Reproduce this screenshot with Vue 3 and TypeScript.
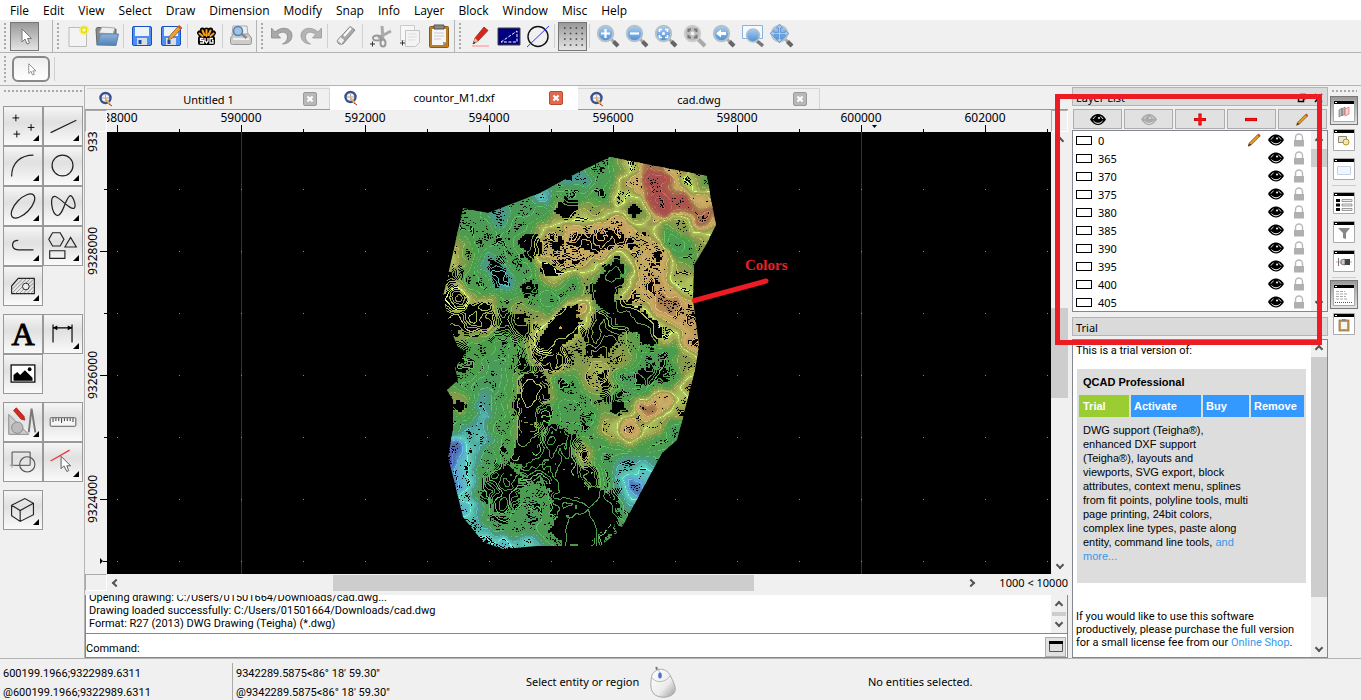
<script setup lang="ts">
type Pt = [number, number]
type Sample = [number, number, number]

const menus = ['File', 'Edit', 'View', 'Select', 'Draw', 'Dimension', 'Modify', 'Snap', 'Info', 'Layer', 'Block', 'Window', 'Misc', 'Help']

const toolbars = [
  { id: 'g-pick', tools: ['arrow*'] },
  { id: 'g-file', tools: ['new', 'open', '|', 'save', 'saveas', '|', 'svg', '|', 'preview'] },
  { id: 'g-edit', tools: ['undo', 'redo', '|', 'erase', '|', 'cut', 'copy', 'paste'] },
  { id: 'g-view', tools: ['pencil', 'draft', 'ortho', '|', 'grid*', '|', 'zin', 'zout', 'zauto', 'zsel', 'zprev', 'zwin', 'pan'] },
]

const palette = [
  ['points+', 'line+', 'arc+', 'circle+', 'ellipse+', 'spline+', 'poly+', 'shape+', 'hatch+'],
  ['text', 'dim+', 'image'],
  ['draft2+', 'ruler', 'info', 'snap+'],
  ['cube+'],
]

const tabs = [
  { name: 'Untitled 1', active: false },
  { name: 'countor_M1.dxf', active: true },
  { name: 'cad.dwg', active: false },
]

const layers = ['0', '365', '370', '375', '380', '385', '390', '395', '400', '405']
const layerTools = [
  { icon: 'eye', label: 'Show all layers' },
  { icon: 'eyeoff', label: 'Hide all layers' },
  { icon: 'plus', label: 'Add layer' },
  { icon: 'minus', label: 'Remove layer' },
  { icon: 'pen', label: 'Edit layer' },
]
const docks = ['wlayers*', 'wblocks', 'wview', '|', 'wprops', 'wfilter', 'wlib', '|', 'wcmd*', 'wclip']

const xTicks = Array.from({ length: 16 }, (_, i) => ({ x: 117 + i * 62, major: i % 2 === 0, label: String(588000 + i * 1000) }))
const yTicks = Array.from({ length: 7 }, (_, i) => ({ y: 189 + i * 62, major: i % 2 === 1 }))
const yLabels = [{ y: 251, t: '9328000' }, { y: 375, t: '9326000' }, { y: 499, t: '9324000' }]
const dots = yTicks.map(t => xTicks.map(x => `M${x.x} ${t.y}h1v1h-1z`).join('')).join('')

/* Terrain outline and elevation samples (x, y, height 0..1) */
const outline: Pt[] = [
  [610, 157], [707, 176], [711, 200], [716, 225], [706, 245], [694, 265], [693, 300], [699, 345], [695, 370],
  [683, 417], [677, 440], [662, 453], [622, 527], [614, 524], [617, 533], [600, 546], [575, 546], [537, 546], [503, 549],
  [483, 542], [463, 517], [454, 480], [448, 457], [453, 430], [453, 400], [447, 390], [458, 380], [455, 368], [466, 352],
  [458, 347], [452, 333], [443, 297], [453, 253], [463, 208], [488, 213], [540, 193], [573, 175],
]
const outlinePath = 'M' + outline.map(p => p.join(' ')).join('L') + 'Z'

const samples: Sample[] = [
  [610, 160, .4], [600, 175, .38], [585, 182, .24], [572, 180, .24], [540, 198, .2], [500, 217, .26], [600, 195, .42],
  [620, 165, .56], [628, 165, .68], [632, 180, .78], [622, 200, .7], [650, 160, .84], [655, 180, .97], [662, 205, 1], [685, 205, .93],
  [705, 218, .9], [690, 182, .68], [703, 182, .48], [712, 230, .7], [700, 198, .75], [676, 170, .75], [470, 215, .38],
  [480, 235, .42], [490, 265, .26], [498, 275, .22], [504, 285, .24], [480, 285, .44], [465, 255, .52], [454, 255, .66],
  [520, 225, .4], [520, 265, .4], [530, 245, .5], [560, 210, .58], [540, 212, .42], [575, 192, .38], [580, 218, .68], [590, 210, .6],
  [550, 235, .76], [545, 250, .78], [560, 262, .78], [575, 235, .8], [600, 232, .8], [620, 230, .8], [600, 250, .78], [530, 205, .32],
  [575, 262, .78], [553, 273, .66], [640, 242, .76], [634, 212, .52], [660, 255, .8], [650, 265, .78], [675, 237, .4],
  [681, 247, .36], [690, 253, .48], [700, 250, .6], [682, 270, .6], [688, 290, .68], [678, 227, .6], [655, 285, .8], [670, 305, .84],
  [690, 320, .8], [697, 345, .8], [528, 288, .45], [550, 298, .36], [570, 285, .44], [500, 302, .5], [520, 312, .6],
  [485, 305, .68], [460, 300, .72], [450, 325, .6], [480, 322, .66], [615, 272, .44], [605, 300, .46], [625, 318, .5], [645, 335, .48],
  [560, 325, .76], [580, 310, .76], [600, 330, .56], [632, 300, .76], [662, 330, .7], [500, 355, .38], [480, 350, .48], [470, 365, .5],
  [495, 368, .32], [520, 362, .5], [545, 345, .72], [555, 362, .65], [575, 350, .58], [590, 358, .6], [615, 340, .58], [620, 358, .62],
  [650, 365, .36], [640, 383, .36], [628, 375, .32], [670, 360, .42], [670, 380, .42], [685, 362, .6], [620, 395, .42], [606, 385, .62],
  [600, 372, .68], [619, 406, .5], [690, 385, .72], [668, 398, .8], [648, 410, .88], [628, 428, .8], [610, 430, .66], [655, 428, .66],
  [678, 410, .62], [660, 442, .42], [675, 432, .3], [460, 405, .62], [455, 422, .4], [465, 433, .22], [457, 450, .08],
  [448, 460, .02], [482, 435, .2], [485, 415, .2], [486, 398, .24], [487, 385, .3], [500, 400, .42], [513, 400, .56], [530, 395, .7],
  [530, 425, .6], [545, 395, .58], [565, 385, .42], [570, 410, .4], [585, 420, .42], [600, 445, .44], [525, 440, .55],
  [515, 460, .5], [510, 480, .46], [495, 480, .46], [500, 505, .46], [458, 485, .1], [463, 510, .14], [475, 450, .2],
  [470, 465, .18], [466, 480, .18], [468, 498, .2], [474, 515, .21], [482, 528, .22], [483, 475, .36], [482, 495, .38],
  [485, 540, .18], [505, 547, .16], [528, 544, .2], [492, 520, .38], [515, 528, .38], [545, 530, .4], [555, 460, .46],
  [570, 465, .48], [586, 455, .66], [592, 475, .56], [605, 455, .34], [620, 470, .22], [636, 487, .08], [645, 472, .16],
  [658, 460, .28], [618, 500, .34], [626, 495, .22], [608, 510, .44], [575, 530, .5], [590, 500, .48], [540, 490, .4], [527, 515, .32],
  [560, 500, .46], [505, 450, .44], [485, 455, .34], [500, 425, .46], [545, 415, .48], [555, 440, .44], [530, 505, .4],
]

/* Flat ground, where only every few contours are shown: cx, cy, rx, ry, rotation */
const flats: number[][] = [
  [613, 274, 12, 16, .2], [604, 292, 13, 14, 0], [628, 316, 22, 13, .5], [650, 333, 10, 15, .1], [560, 328, 14, 26, .6], [530, 398, 11, 26, 0],
  [530, 245, 10, 13, 0], [527, 288, 9, 7, 0], [565, 207, 10, 9, 0], [574, 528, 24, 18, 0], [598, 508, 16, 22, -.4],
  [526, 443, 12, 14, .4], [619, 405, 6, 6, 0], [568, 485, 20, 12, .3], [556, 243, 7, 8, 0],
  [507, 470, 5, 14, .3], [657, 257, 6, 6, 0], [545, 268, 7, 5, 0], [458, 406, 6, 7, 0], [633, 210, 5, 8, 0],
]
/* Gentle slopes: separate contour lines instead of dense ones */
const slopes: number[][] = [
  [490, 322, 48, 18, .25], [455, 300, 14, 34, 0], [545, 355, 26, 16, 0], [600, 330, 18, 26, .3], [600, 240, 34, 9, 0],
  [500, 490, 18, 30, 0], [550, 455, 36, 28, .2], [530, 400, 18, 38, 0], [585, 505, 34, 44, 0], [610, 385, 12, 20, 0],
  [460, 352, 8, 12, 0], [498, 272, 10, 14, 0], [560, 268, 20, 8, 0], [650, 375, 18, 9, 0],
]

const LEVELS = 130
const STEP = 2
const X0 = 440, Y0 = 154, NX = 140, NY = 200

function hash(x: number, y: number): number {
  const s = Math.sin(x * 127.1 + y * 311.7) * 43758.5453
  return s - Math.floor(s)
}
function noise(x: number, y: number): number {
  const ix = Math.floor(x), iy = Math.floor(y)
  const fx = x - ix, fy = y - iy
  const u = fx * fx * (3 - 2 * fx), v = fy * fy * (3 - 2 * fy)
  const a = hash(ix, iy), b = hash(ix + 1, iy), c = hash(ix, iy + 1), d = hash(ix + 1, iy + 1)
  return a + (b - a) * u + (c - a) * v + (a - b - c + d) * u * v - 0.5
}
function height(px: number, py: number): number {
  const x = px + noise(px / 9, py / 9) * 7
  const y = py + noise(px / 9 + 40, py / 9) * 7
  let sum = 0, weight = 0
  for (const [sx, sy, h] of samples) {
    const d = (x - sx) ** 2 + (y - sy) ** 2 + 60
    const w = 1 / (d * d)
    sum += w * h
    weight += w
  }
  return sum / weight + noise(px / 11, py / 11) * 0.035 + noise(px / 4, py / 4) * 0.018
}
function inside(areas: number[][], px: number, py: number): boolean {
  const x = px + noise(px / 5, py / 5) * 10, y = py + noise(px / 5 + 9, py / 5) * 10
  return areas.some(([cx, cy, rx, ry, r]) => {
    const dx = x - cx, dy = y - cy
    const u = dx * Math.cos(r) + dy * Math.sin(r), v = dy * Math.cos(r) - dx * Math.sin(r)
    return (u / rx) ** 2 + (v / ry) ** 2 < 1
  })
}

const ramp: [number, number[]][] = [
  [0, [98, 82, 196]], [.08, [76, 108, 176]], [.14, [92, 172, 206]], [.2, [92, 204, 180]], [.25, [74, 152, 152]], [.32, [74, 155, 90]],
  [.48, [76, 156, 74]], [.56, [116, 155, 74]], [.62, [152, 155, 76]], [.68, [176, 204, 98]], [.72, [155, 150, 76]], [.77, [204, 174, 100]],
  [.84, [160, 116, 76]], [.9, [172, 84, 76]], [1, [160, 74, 76]],
]
function colorAt(level: number): string {
  const t = Math.min(1, Math.max(0, level / LEVELS))
  let i = 1
  while (i < ramp.length - 1 && ramp[i][0] < t) i++
  const [t0, a] = ramp[i - 1], [t1, b] = ramp[i]
  const k = (t - t0) / (t1 - t0)
  const boost = level % 8 === 0 ? 1.25 : 1
  return `rgb(${a.map((v, n) => Math.min(255, Math.round((v + (b[n] - v) * k) * boost))).join(',')})`
}

function buildContours() {
  const grid: number[][] = []
  for (let j = 0; j <= NY; j++) {
    grid.push([])
    for (let i = 0; i <= NX; i++) grid[j].push(height(X0 + i * STEP, Y0 + j * STEP) * LEVELS)
  }
  const parts: string[][] = Array.from({ length: LEVELS + 6 }, () => [])
  for (let j = 0; j < NY; j++) {
    for (let i = 0; i < NX; i++) {
      const x = X0 + i * STEP, y = Y0 + j * STEP
      const a = grid[j][i], b = grid[j][i + 1], c = grid[j + 1][i + 1], d = grid[j + 1][i]
      const lo = Math.max(1, Math.ceil(Math.min(a, b, c, d))), hi = Math.min(LEVELS + 5, Math.floor(Math.max(a, b, c, d)))
      const every = inside(flats, x, y) ? 10 : inside(slopes, x, y) ? 2 : 1
      if (every === 1) {
        const level = Math.max(1, Math.min(LEVELS, Math.round((a + c) / 2)))
        const cover = 0.74 + noise(x / 6, y / 6) * 0.8
        if (level % 8 !== 0 && hash(x, y) < cover) parts[level].push(`M${x} ${y + .5}h2`)
        if (level % 8 !== 0 && hash(y, x) < cover) parts[level].push(`M${x} ${y + 1.5}h2`)
      }
      for (let l = lo; l <= hi; l++) {
        if (l % every !== 0) continue
        const p: string[] = []
        const cut = (v0: number, v1: number, ax: number, ay: number, bx: number, by: number) => {
          if ((v0 < l) === (v1 < l)) return
          const k = (l - v0) / (v1 - v0)
          p.push(`${(ax + (bx - ax) * k).toFixed(1)} ${(ay + (by - ay) * k).toFixed(1)}`)
        }
        cut(a, b, x, y, x + STEP, y)
        cut(b, c, x + STEP, y, x + STEP, y + STEP)
        cut(c, d, x + STEP, y + STEP, x, y + STEP)
        cut(d, a, x, y + STEP, x, y)
        for (let n = 0; n + 1 < p.length; n += 2) parts[l].push(`M${p[n]}L${p[n + 1]}`)
      }
    }
  }
  return parts.map((s, l) => ({ l, d: s.join(''), color: colorAt(l) })).filter(c => c.d)
}
const contours = buildContours()
const bare = (s: string) => s.replace(/[*+]/, '')
</script>

<template>
  <div class="app">
    <svg class="defs" aria-hidden="true">
      <defs>
        <linearGradient id="gLens" x1="0" y1="0" x2="0" y2="1"><stop offset="0" stop-color="#a9ccf0" /><stop offset="1" stop-color="#4d8fd6" /></linearGradient>
        <linearGradient id="gFold" x1="0" y1="0" x2="0" y2="1"><stop offset="0" stop-color="#8fb4da" /><stop offset="1" stop-color="#4f81b5" /></linearGradient>
        <linearGradient id="gMouse" x1="0" y1="0" x2="1" y2="1"><stop offset="0" stop-color="#fff" /><stop offset=".6" stop-color="#ececec" /><stop offset="1" stop-color="#999" /></linearGradient>
      </defs>
      <symbol id="i-arrow" viewBox="0 0 24 24"><path d="M9 5v13l3-3 2 5 2.500-1-2-4.500h4z" fill="#fff" stroke="#777" /></symbol>
      <symbol id="i-new" viewBox="0 0 24 24"><path d="M3 3.500h17.500v19H3z" fill="#f3f3f3" stroke="#bbb" /><circle cx="18" cy="6" r="5" fill="#f4ee50" opacity=".7" /><circle cx="18" cy="6" r="2.500" fill="#fffbc0" stroke="#e8dc00" stroke-width="1.500" /></symbol>
      <symbol id="i-open" viewBox="0 0 24 24"><path d="M2 21L1 5l1-1.500h6L9 5h12v5z" fill="#888" stroke="#666" /><path d="M4 9l3-6 13 1-2 6z" fill="#eee" stroke="#aaa" /><path d="M2 21l3.500-11H23.500L21 21.500z" fill="url(#gFold)" stroke="#5b84ae" /></symbol>
      <symbol id="i-save" viewBox="0 0 24 24"><rect x="2.500" y="2.500" width="19" height="19" rx="1.500" fill="#4d8ff0" stroke="#1450c0" /><path d="M5 3h14v9H5z" fill="#eef3fb" /><path d="M7 14h10v7H7z" fill="#d8dde6" /><path d="M8.500 16h3v4h-3z" fill="#1a48b0" /></symbol>
      <symbol id="i-saveas" viewBox="0 0 24 24"><rect x="2.500" y="2.500" width="19" height="19" rx="1.500" fill="#4d8ff0" stroke="#1450c0" /><path d="M5 3h14v9H5z" fill="#eef3fb" /><path d="M7 14h10v7H7z" fill="#d8dde6" /><path d="M8.500 16h3v4h-3z" fill="#1a48b0" /><path d="M9 16l1.500-4L20 1.500l3 2.500-9.500 10z" fill="#f0a030" stroke="#8a5a10" stroke-width=".8" /><path d="M20 1.500l3 2.500-1.500 1.500-3-2.500z" fill="#d85030" /></symbol>
      <symbol id="i-svg" viewBox="0 0 24 24"><rect x="4" y="12" width="17" height="9" rx="2" /><path d="M12.500 12V6M8 12L5.500 9M17 12l2.500-3M9.500 10L8.500 6M15.500 10l1-4" stroke="#000" stroke-width="5" stroke-linecap="round" /><path d="M12.500 12V6M8.500 12L5.500 9.500M16.500 12l3-2.500M10.500 11L8.500 6.500M14.500 11l2-4.500" stroke="#f9a11b" stroke-width="2" stroke-linecap="round" /><path d="M9.500 14.500h-3v2h3v2.500h-3.500M11 14v3l1.500 2 1.500-2v-3M19 14.500h-3v4.500h3v-2.500h-1" fill="none" stroke="#fff" stroke-width="1.300" /></symbol>
      <symbol id="i-preview" viewBox="0 0 24 24"><path d="M4 2h14l1 9H3z" fill="#eee" stroke="#aaa" /><path d="M1.500 14l3-4h15l3 4v4.500q0 2-2 2h-17q-2 0-2-2z" fill="#ccc" stroke="#999" /><path d="M4 14h16v2H4z" fill="#eee" /><circle cx="9" cy="7" r="4.500" fill="#9cc3ea" stroke="#567faa" stroke-width="1.500" /><path d="M12.500 10l5 4" stroke="#888" stroke-width="2.500" /></symbol>
      <symbol id="i-undo" viewBox="0 0 24 24"><path d="M1.500 4v10h9l-3-3.500c5-4.500 10-2 10 2.500 0 3-2 5.500-5 7 6 0 9.500-4 9.500-8.500C22 4 12 1.500 5 8z" fill="#a9a9a9" stroke="#888" stroke-width=".8" /></symbol>
      <symbol id="i-redo" viewBox="0 0 24 24"><path d="M22.500 4v10h-9l3-3.500c-5-4.500-10-2-10 2.500 0 3 2 5.500 5 7-6 0-9.500-4-9.500-8.500C2 4 12 1.500 19 8z" fill="#b4b4b4" stroke="#999" stroke-width=".8" /></symbol>
      <symbol id="i-erase" viewBox="0 0 24 24"><path d="M3 17L16 2.500l5 3.500L9 20H5z" fill="#aaa" stroke="#888" /><path d="M3 17l4.500 3.500L11 16l-4.500-3.500z" fill="#eee" stroke="#999" /><path d="M10 12l7-8" stroke="#fff" stroke-width="2" /></symbol>
      <symbol id="i-cut" viewBox="0 0 24 24"><path d="M13 2l1 14M22 7L9 14" stroke="#aaa" stroke-width="3" /><ellipse cx="8" cy="14" rx="4" ry="2.500" fill="none" stroke="#999" stroke-width="2" /><ellipse cx="14" cy="19" rx="2.500" ry="3.500" fill="none" stroke="#999" stroke-width="2" /><path d="M1 20h5M3.500 17.500v5" stroke="#333" /></symbol>
      <symbol id="i-copy" viewBox="0 0 24 24"><path d="M2.500 1.500h14v15h-14z" fill="#f7f7f7" stroke="#ccc" /><path d="M7.500 6.500h14v12l-4 4h-10z" fill="#f4f4f4" stroke="#c4c4c4" /><path d="M10 10h9M10 13h9M10 16h7" stroke="#ddd" /><path d="M2 19h5M4.500 16.500v5" stroke="#333" /></symbol>
      <symbol id="i-paste" viewBox="0 0 24 24"><rect x="2.500" y="2.500" width="19" height="21" rx="1" fill="#b87e28" stroke="#8a5a14" /><path d="M5 5h14v13l-3 3H5z" fill="#f5f5f5" /><path d="M7 9h10M7 12h10M7 15h7" stroke="#ccc" /><path d="M16 21v-3h3z" fill="#999" /><path d="M7 1h10v4H7z" fill="#888" stroke="#555" /></symbol>
      <symbol id="i-pencil" viewBox="0 0 24 24"><path d="M4 22h17" stroke="#f88" /><path d="M5 20l2-6L16 3l4 3.500L10 17z" fill="#d9261c" stroke="#8a1a12" stroke-width=".7" /><path d="M5 20l2-6 3 3z" fill="#e8c090" /><path d="M5 20l1-2.500 1.500 1.500z" fill="#222" /></symbol>
      <symbol id="i-draft" viewBox="0 0 24 24"><path d="M1 4h22v17H1z" fill="#000080" stroke="#444" /><path d="M4 18L20 7v11z" fill="none" stroke="#fff" stroke-dasharray="3 1.500" /></symbol>
      <symbol id="i-ortho" viewBox="0 0 24 24"><circle cx="12" cy="12.500" r="10" fill="none" stroke="#111" stroke-width="1.400" /><path d="M1 23L23 2" stroke="#33f" /></symbol>
      <symbol id="i-grid" viewBox="0 0 24 24"><path d="M3 4h19M3 9.500h19M3 15h19M3 21h19" stroke="#444" stroke-width="1.600" stroke-dasharray="1.600 4.200" /></symbol>
      <symbol id="lens" viewBox="0 0 24 24"><path d="M15 15l7 7" stroke="#aaa" stroke-width="3" /><path d="M17.500 17.500l4.500 4.500" stroke="#666" stroke-width="4" /><circle cx="9.500" cy="9.500" r="7.700" fill="url(#gLens)" stroke="#b4c2cc" stroke-width="2" /></symbol>
      <symbol id="i-zin" viewBox="0 0 24 24"><use href="#lens" /><path d="M5 9.500h9M9.500 5v9" stroke="#fff" stroke-width="2.200" /></symbol>
      <symbol id="i-zout" viewBox="0 0 24 24"><use href="#lens" /><path d="M5 9.500h9" stroke="#fff" stroke-width="2.200" /></symbol>
      <symbol id="i-zauto" viewBox="0 0 24 24"><use href="#lens" /><path d="M5.500 8V5.500H8M11 5.500h2.500V8M13.500 11v2.500H11M8 13.500H5.500V11" fill="none" stroke="#fff" stroke-width="1.600" /><circle cx="9.500" cy="9.500" r="1.500" fill="#fff" /></symbol>
      <symbol id="i-zsel" viewBox="0 0 24 24"><path d="M15 15l7 7" stroke="#aaa" stroke-width="4" /><circle cx="9.500" cy="9.500" r="7.700" fill="#bbb" stroke="#ccc" stroke-width="2" /><path d="M5.500 8V5.500H8M11 5.500h2.500V8M13.500 11v2.500H11M8 13.500H5.500V11" fill="none" stroke="#777" stroke-width="2" /><circle cx="9.500" cy="9.500" r="2" fill="#eee" /></symbol>
      <symbol id="i-zprev" viewBox="0 0 24 24"><use href="#lens" /><path d="M4 9.500l5-4v2.500h5v3H9v2.500z" fill="#fff" /></symbol>
      <symbol id="i-zwin" viewBox="0 0 24 24"><path d="M1.500 1.500h20v13h-20z" fill="#f6faff" stroke="#8ab0dc" /><path d="M16 17l6 5" stroke="#777" stroke-width="3.500" /><circle cx="12" cy="11.500" r="6.500" fill="url(#gLens)" stroke="#b4c2cc" stroke-width="1.500" /></symbol>
      <symbol id="i-pan" viewBox="0 0 24 24"><use href="#lens" /><path d="M9.500 0l3 4h-2v4.500H15v-2l4 3-4 3v-2h-4.500V15h2l-3 4-3-4h2v-4.500H4v2l-4-3 4-3v2h4.500V4h-2z" fill="#a6caf0" stroke="#5b92d0" stroke-width=".8" /></symbol>

      <symbol id="i-points" viewBox="0 0 40 40"><path d="M9 11.500h7M12.500 8v7M25 21.500h7M28.500 18v7M10 28.500h7M13.500 25v7" stroke="#000" /></symbol>
      <symbol id="i-line" viewBox="0 0 40 40"><path d="M7 27L34 14" stroke="#222" stroke-width="1.300" /></symbol>
      <symbol id="i-arc" viewBox="0 0 40 40"><path d="M8 31C8 16 18 8.500 31 8.500" fill="none" stroke="#222" stroke-width="1.300" /></symbol>
      <symbol id="i-circle" viewBox="0 0 40 40"><circle cx="19.500" cy="19.500" r="11" fill="none" stroke="#222" stroke-width="1.300" /></symbol>
      <symbol id="i-ellipse" viewBox="0 0 40 40"><ellipse cx="20" cy="20" rx="16" ry="7.500" transform="rotate(-46 20 20)" fill="none" stroke="#222" stroke-width="1.300" /></symbol>
      <symbol id="i-spline" viewBox="0 0 40 40"><path d="M12 10C5 8 8 28 14 30C20 31 23 9 28 9C31 10 34 20 32 22C28 25 18 12 12 10z" fill="none" stroke="#222" stroke-width="1.300" /></symbol>
      <symbol id="i-poly" viewBox="0 0 40 40"><path d="M15 14C10 14 9 17 9 19C9 23 12 24 15 24H31" fill="none" stroke="#222" stroke-width="1.300" /></symbol>
      <symbol id="i-shape" viewBox="0 0 40 40"><path d="M5 13l4-7h8l4 7-4 7H9zM22 21l6-10 6 10zM6 25h16v8H6z" fill="none" stroke="#222" stroke-width="1.200" /></symbol>
      <symbol id="i-hatch" viewBox="0 0 40 40"><path d="M8 20l7-8h17v16H8z" fill="none" stroke="#222" stroke-width="1.200" /><path d="M8 24L20 12M8 28L24 12M12 28L28 12M16 28L32 12M20 28L32 16M24 28l8-8M28 28l4-4" stroke="#777" stroke-width=".8" /><circle cx="23" cy="20.500" r="3.500" fill="#eee" stroke="#222" /></symbol>
      <symbol id="i-dim" viewBox="0 0 40 40"><path d="M9.500 10v19M29.500 10v19M9 13.500h20" stroke="#000" stroke-width="1.200" /><path d="M9 13.500l5-2.500v5zM30 13.500l-5-2.500v5z" /></symbol>
      <symbol id="i-image" viewBox="0 0 40 40"><rect x="7.500" y="10.500" width="25" height="18" fill="#fff" stroke="#000" stroke-width="1.300" /><path d="M10 27v-6l4-3 3 3 5-5 8 8v3z" /><circle cx="27" cy="15" r="2" /></symbol>
      <symbol id="i-draft2" viewBox="0 0 40 40"><path d="M5 12v21h21z" fill="#ccc" stroke="#888" /><circle cx="14" cy="26" r="6" fill="#bbb" stroke="#888" /><path d="M29 6l-3 25M29 6l4 25" stroke="#777" stroke-width="2" /><path d="M10 8l3-3 8 9 1 4-4-1z" fill="#d9261c" stroke="#8a1a12" stroke-width=".7" /></symbol>
      <symbol id="i-ruler" viewBox="0 0 40 40"><rect x="6.500" y="15.500" width="27" height="9" rx="1" fill="#f5f5f5" stroke="#555" /><path d="M9.500 16v4M12.500 16v3M15.500 16v3M18.500 16v5M21.500 16v3M24.500 16v3M27.500 16v3M30.500 16v4" stroke="#333" /></symbol>
      <symbol id="i-info" viewBox="0 0 40 40"><path d="M8.500 9.500h19v14h-19z" fill="none" stroke="#444" /><circle cx="24.500" cy="22.500" r="8" fill="none" stroke="#555" stroke-width="1.200" /><path d="M6 23.500h5M8.500 21v5" stroke="#999" /></symbol>
      <symbol id="i-snap" viewBox="0 0 40 40"><path d="M7 19L27 7.500" stroke="#e33" stroke-width="1.300" /><path d="M18 14v13l3-3 3 6 2-1-2-5h4z" fill="#fff" stroke="#555" /></symbol>
      <symbol id="i-cube" viewBox="0 0 40 40"><path d="M8 15L22 8l9 5v12L17 32l-9-6zM8 15l9 5.500L31 13M17 20.500V32" fill="none" stroke="#222" stroke-width="1.200" /></symbol>

      <symbol id="i-eye" viewBox="0 0 16 12"><path d="M0 6C3 1 6 .5 8 .5S13 1 16 6C13 10.500 10 11.500 8 11.500S3 10.500 0 6z" fill="#000" /><path d="M3 5.500C4 4 4.500 3.500 5.500 3M13 5.500C12 4 11.500 3.500 10.500 3M3.500 7.500C5 9.300 6.500 9.800 8 9.800S11 9.300 12.500 7.500" stroke="#fff" fill="none" /><circle cx="9" cy="4.500" r="1" fill="#fff" /></symbol>
      <symbol id="i-eyeoff" viewBox="0 0 16 12"><path d="M0 6C3 1 6 .5 8 .5S13 1 16 6C13 10.500 10 11.500 8 11.500S3 10.500 0 6z" fill="#aaa" /><path d="M3 5.500C4 4 4.500 3.500 5.500 3M13 5.500C12 4 11.500 3.500 10.500 3M3.500 7.500C5 9.300 6.500 9.800 8 9.800S11 9.300 12.500 7.500" stroke="#e1e1e1" fill="none" /><circle cx="9" cy="4.500" r="1" fill="#e1e1e1" /></symbol>
      <symbol id="i-plus" viewBox="0 0 16 12"><path d="M2 6h12M8 0v12" stroke="#c00000" stroke-width="3.200" /><path d="M3 6h10M8 1v10" stroke="#ff1010" stroke-width="2" /></symbol>
      <symbol id="i-minus" viewBox="0 0 16 12"><path d="M2 6h12" stroke="#c00000" stroke-width="3.200" /><path d="M3 6h10" stroke="#ff1010" stroke-width="2" /></symbol>
      <symbol id="i-pen" viewBox="0 0 16 16"><path d="M1.500 15l1-3.500L12 2l2.500 2L5 13.500z" fill="#d99a30" stroke="#7a5210" stroke-width=".8" /><path d="M12 2l1.500-1.500L15.500 3l-1 1.500z" fill="#d43a2a" /><path d="M1 15.500l1.500-3.500L5 13.500z" fill="#433" /></symbol>
      <symbol id="i-lock" viewBox="0 0 12 14"><path d="M2.500 7V4.500a3.500 3.500 0 0 1 7 0V7" fill="none" stroke="#b8b8b8" stroke-width="1.400" /><rect x="1" y="7" width="10" height="6.500" fill="#b0b0b0" /></symbol>
      <symbol id="i-q" viewBox="0 0 16 16"><circle cx="7.500" cy="7" r="5" fill="#f2f2fa" stroke="#3a5088" stroke-width="2.400" /><path d="M4 7h7M7.500 4v6" stroke="#aab" /><path d="M7 6l6 7-2 1-4-6z" fill="#f0b040" /><path d="M11 13l3 2" stroke="#c22" /></symbol>

      <symbol id="win" viewBox="0 0 22 22"><path d="M.5.500h21v21H.5z" fill="#fff" stroke="#aaa" /><path d="M1 1h20v3H1z" /><path d="M2 2h2v1H2z" fill="#fff" /></symbol>
      <symbol id="i-wlayers" viewBox="0 0 22 22"><use href="#win" /><path d="M6 10l3-2v7l-3 2zM9 9l3-2v7l-3 2z" fill="#bbb" stroke="#777" stroke-width=".7" /><path d="M12 9l4-2v7l-4 2z" fill="#fcc" stroke="#d66" stroke-width=".7" /></symbol>
      <symbol id="i-wblocks" viewBox="0 0 22 22"><use href="#win" /><path d="M5.500 7.500h8v6h-8z" fill="#eee6c8" stroke="#887" /><circle cx="13" cy="13" r="3" fill="#f4e6b0" stroke="#a92" /></symbol>
      <symbol id="i-wview" viewBox="0 0 22 22"><use href="#win" /><path d="M4.500 8.500h13v8h-13z" fill="#f2f6fb" stroke="#c4d4e8" /></symbol>
      <symbol id="i-wprops" viewBox="0 0 22 22"><use href="#win" /><path d="M3 7h4v3H3zM3 11.500h4v3H3zM3 16h4v3H3z" /><path d="M9 7.500h10v2H9zM9 12h10v2H9zM9 16.500h10v2H9z" fill="#eee" stroke="#777" stroke-width=".7" /></symbol>
      <symbol id="i-wfilter" viewBox="0 0 22 22"><use href="#win" /><path d="M5 7h12l-4 5v6l-3-1v-5z" fill="#888" /></symbol>
      <symbol id="i-wlib" viewBox="0 0 22 22"><use href="#win" /><path d="M3 12h16" stroke="#e99" /><path d="M5.500 8v8" stroke="#777" /><path d="M8 10l4-1v6l-4-1z" fill="#ccc" stroke="#555" stroke-width=".7" /><path d="M12 9h5v6h-5z" fill="#444" /></symbol>
      <symbol id="i-wcmd" viewBox="0 0 22 22"><use href="#win" /><path d="M3 7.500h9M3 10h11M3 12.500h10M3 15h12" stroke="#aaa" stroke-dasharray="3 1" /><path d="M2 18.500h18" stroke="#555" stroke-dasharray="1 1" /></symbol>
      <symbol id="i-wclip" viewBox="0 0 22 22"><use href="#win" /><rect x="6" y="7" width="10" height="11" fill="#c79a5b" stroke="#8a6430" stroke-width=".7" /><path d="M8 9h6v7H8z" fill="#f5f5f5" /><path d="M9 6h4v2H9z" fill="#888" /></symbol>
    </svg>

    <nav class="menubar"><button v-for="m in menus" :key="m" type="button">{{ m }}</button></nav>

    <div class="toolbar">
      <div v-for="g in toolbars" :key="g.id" class="group" :class="g.id">
        <span class="grip" />
        <template v-for="(t, i) in g.tools" :key="i">
          <span v-if="t === '|'" class="sep" />
          <button v-else type="button" class="tool" :class="{ on: t.endsWith('*') }" :aria-label="bare(t)"><svg><use :href="'#i-' + bare(t)" /></svg></button>
        </template>
      </div>
    </div>
    <div class="options">
      <span class="grip" />
      <button type="button" class="reset" aria-label="Select"><svg><use href="#i-arrow" /></svg></button>
      <span class="sep" />
    </div>

    <div class="body">
      <aside class="palette">
        <span class="hgrip" />
        <div v-for="(g, i) in palette" :key="i" class="tools">
          <button v-for="t in g" :key="t" type="button" :class="{ more: t.endsWith('+') }" :aria-label="bare(t)">
            <span v-if="t === 'text'" class="letter">A</span>
            <svg v-else><use :href="'#i-' + bare(t)" /></svg>
          </button>
        </div>
      </aside>

      <main class="center">
        <div class="tabs">
          <div v-for="t in tabs" :key="t.name" class="tab" :class="{ active: t.active }">
            <svg class="q"><use href="#i-q" /></svg><span>{{ t.name }}</span>
            <button type="button" :aria-label="'Close ' + t.name"><svg viewBox="0 0 14 14"><path d="M4 4l6 6M10 4l-6 6" stroke="#fff" stroke-width="2.400" /></svg></button>
          </div>
        </div>
        <div class="viewport">
          <div class="corner" />
          <svg class="hruler">
            <g transform="translate(-107 -110)">
              <template v-for="t in xTicks" :key="t.x">
                <path :d="`M${t.x + .5} ${t.major ? 125 : 129}V132`" stroke="#000" />
                <text v-if="t.major" :x="t.x" y="122" text-anchor="middle">{{ t.label }}</text>
              </template>
              <path d="M872 125h5l-2.500 3z" />
            </g>
          </svg>
          <div class="corner" />
          <svg class="vruler">
            <g transform="translate(-85 -132)">
              <path v-for="t in yTicks" :key="t.y" :d="`M${t.major ? 100 : 104} ${t.y + .5}H107`" stroke="#000" />
              <text v-for="l in yLabels" :key="l.t" :transform="`translate(97 ${l.y}) rotate(-90)`" text-anchor="middle">{{ l.t }}</text>
              <text transform="translate(97 152) rotate(-90)">9330000</text>
              <path d="M100 558v6l3-3zM103 561h4v1h-4z" />
            </g>
          </svg>
          <svg class="drawing">
            <defs><clipPath id="terrain"><path :d="outlinePath" /></clipPath></defs>
            <g transform="translate(-107 -132)">
              <path d="M241.500 132V575M861.500 132V575" stroke="#333" />
              <path :d="dots" fill="#888" />
              <g clip-path="url(#terrain)" fill="none" shape-rendering="crispEdges">
                <path v-for="c in contours" :key="c.l" :d="c.d" :stroke="c.color" />
              </g>
              <path d="M694.500 300.500L766 281" stroke="#ed1c24" stroke-width="5" stroke-linecap="round" />
              <text class="note" x="745" y="270">Colors</text>
            </g>
          </svg>
          <div class="vscroll"><i class="up" /><b /><i class="down" /></div>
          <div class="corner" />
          <div class="hscroll"><i class="left" /><b /><i class="right" /></div>
          <span class="gridinfo">1000 &lt; 10000</span>
        </div>
        <div class="console">
          <div class="log">
            <p>Opening drawing: C:/Users/01501664/Downloads/cad.dwg...</p>
            <p>Drawing loaded successfully: C:/Users/01501664/Downloads/cad.dwg</p>
            <p>Format: R27 (2013) DWG Drawing (Teigha) (*.dwg)</p>
            <div class="logscroll"><i class="up" /><b /><i class="down" /></div>
          </div>
          <div class="command">
            <label for="cmd">Command:</label><input id="cmd" type="text">
            <button type="button" aria-label="Detach"><svg viewBox="0 0 14 11"><path d="M.5.500h13v10H.5z" fill="#e1e1e1" stroke="#555" /><path d="M0 0h14v3H0z" /></svg></button>
          </div>
        </div>
      </main>

      <section class="dock">
        <header class="title"><span>Layer List</span><svg viewBox="0 0 26 10"><path d="M1.500 3.500h5v5h-5zM3 1.500h5v5" fill="none" stroke="#000" stroke-width="1.500" /><path d="M18 1l7 8M25 1l-7 8" stroke="#000" stroke-width="1.500" /></svg></header>
        <div class="ltools"><button v-for="t in layerTools" :key="t.icon" type="button" :aria-label="t.label"><svg><use :href="'#i-' + t.icon" /></svg></button></div>
        <div class="layers">
          <ul>
            <li v-for="(l, i) in layers" :key="l"><span class="swatch" /><span class="lname">{{ l }}</span>
              <svg v-if="i === 0" class="pen"><use href="#i-pen" /></svg><svg class="eye"><use href="#i-eye" /></svg><svg class="lock"><use href="#i-lock" /></svg></li>
          </ul>
          <div class="lscroll"><i class="up" /><b /><i class="down" /></div>
        </div>
        <header class="title second">Trial</header>
        <div class="trial">
          <div class="content">
            <p>This is a trial version of:</p>
            <div class="card">
              <h2>QCAD Professional</h2>
              <div class="cells"><button class="green" type="button">Trial</button><button type="button">Activate</button><button type="button">Buy</button><button type="button">Remove</button></div>
              <p>DWG support (Teigha®),<br>enhanced DXF support<br>(Teigha®), layouts and<br>viewports, SVG export, block<br>attributes, context menu, splines<br>from fit points, polyline tools, multi<br>page printing, 24bit colors,<br>complex line types, paste along<br>entity, command line tools, <a href="#">and<br>more...</a></p>
            </div>
            <p>If you would like to use this software<br>productively, please purchase the full version<br>for a small license fee from our <a href="#">Online Shop</a>.</p>
          </div>
          <div class="tscroll"><i class="up" /><b /><i class="down" /></div>
        </div>
        <div class="frame" />
      </section>

      <aside class="strip">
        <span class="hgrip" />
        <template v-for="(d, i) in docks" :key="i">
          <span v-if="d === '|'" class="hsep" />
          <button v-else type="button" :class="{ on: d.endsWith('*') }" :aria-label="bare(d)"><svg><use :href="'#i-' + bare(d)" /></svg></button>
        </template>
      </aside>
    </div>

    <footer class="status">
      <div class="coords"><span>600199.1966;9322989.6311</span><span>@600199.1966;9322989.6311</span></div>
      <div class="coords polar"><span>9342289.5875&lt;86° 18' 59.30"</span><span>@9342289.5875&lt;86° 18' 59.30"</span></div>
      <div class="hint">Select entity or region
        <svg viewBox="0 0 28 32"><path d="M7 1l2 4" stroke="#777" stroke-width="2" /><path d="M3 9C7 1 18 1 22 11c3 6 6 12 3 16-5 6-16 5-20 1C0 22 2 15 3 9z" fill="url(#gMouse)" stroke="#aaa" /><path d="M3 12c5 6 14 4 18-2M9 3l2 4" fill="none" stroke="#bbb" /><ellipse cx="11" cy="9.500" rx="1.800" ry="3" fill="#4a6fd8" /></svg>
      </div>
      <div>No entities selected.</div>
    </footer>
  </div>
</template>

<style>
body { margin: 0; }
</style>

<style scoped>
* { box-sizing: border-box; }
.app { display: flex; flex-direction: column; height: 100vh; overflow: hidden; background: #f0f0f0; color: #000; font: 11px/13px "Noto Sans", sans-serif; }
button { padding: 0; margin: 0; border: 0; background: none; font: inherit; color: inherit; }
p, h2, ul { margin: 0; padding: 0; }
svg { display: block; flex: none; }
.defs { position: absolute; width: 0; height: 0; }
.menubar { display: flex; flex: none; height: 20px; gap: 14px; padding: 0 10px; background: #fff; font: 12px/19px "Open Sans", sans-serif; }
.toolbar { display: flex; flex: none; height: 33px; border-bottom: 1px solid #b4b4b4; }
.group { display: flex; align-items: center; padding-right: 1px; border-right: 1px solid #b4b4b4; }
.g-pick { padding-right: 13px; }
.g-view { border: 0; }
.grip { flex: none; width: 3px; height: 26px; margin: 0 3px 0 4px; background: radial-gradient(circle at 1px 1px, #aaa 1px, transparent 1px) 0 0 / 3px 4px; }
.sep { flex: none; width: 1px; height: 24px; margin: 0 3px 0 2px; background: #d0d0d0; }
.tool { display: grid; place-items: center; width: 29px; height: 29px; }
.tool svg { width: 24px; height: 24px; }
.on { border: 1px solid #777; background: linear-gradient(#999, #e4e4e4); }
.options { display: flex; flex: none; align-items: center; height: 33px; border-bottom: 1px solid #b4b4b4; }
.reset { display: grid; place-items: center; width: 38px; height: 26px; margin: 0 2px; border: 2px solid #888; border-radius: 6px; background: linear-gradient(#eee, #fff); }
.reset svg { width: 18px; height: 18px; }
.body { display: flex; flex: 1; min-height: 0; border-bottom: 1px solid #b4b4b4; }
.palette { flex: none; width: 85px; padding: 0 2px 0 3px; border-right: 1px solid #b4b4b4; }
.hgrip { display: block; height: 3px; margin: 4px 0 13px 1px; background: radial-gradient(circle at 1px 1px, #aaa 1px, transparent 1px) 0 0 / 4px 3px; }
.tools { display: grid; grid-template-columns: 40px 40px; margin-bottom: 8px; }
.tools button { position: relative; width: 40px; height: 40px; border: 1px solid #999; background: linear-gradient(#f5f5f5, #e0e0e0 40%, #fafafa); }
.tools svg { width: 38px; height: 38px; }
.more::after { content: ""; position: absolute; right: 3px; bottom: 4px; border: 3px solid #000; border-top-color: transparent; border-left-color: transparent; }
.letter { font: 32px/38px "Liberation Serif", serif; -webkit-text-stroke: 1px #000; }
.center { display: flex; flex: 1; flex-direction: column; min-width: 0; margin-right: 3px; }
.tabs { display: flex; align-items: flex-end; height: 24px; padding-left: 2px; border-bottom: 1px solid #999; }
.tab { display: flex; align-items: center; width: 243px; height: 21px; padding: 0 12px 0 11px; border: 1px solid #d5d5d5; border-bottom: 0; border-left: 0; }
.tab.active { width: 248px; height: 24px; margin-bottom: -1px; padding-right: 14px; padding-bottom: 2px; padding-left: 13px; background: #fff; border-color: #fff; }
.tab:last-child { width: 242px; }
.tab span { flex: 1; text-align: center; }
.tab .q { width: 16px; height: 16px; }
.tab button { width: 14px; height: 14px; border: 1px solid #999; border-radius: 2px; background: #b8b8b8; }
.tab button svg { width: 12px; height: 12px; }
.tab.active button { border-color: #c0482e; background: #e06a50; }
.viewport { display: grid; flex: 1; grid-template: 22px minmax(0, 1fr) 17px / 22px minmax(0, 1fr) 73px 17px; min-height: 0; }
.hruler, .drawing { grid-column: span 2; }
.corner { border: 1px solid #aaa; border-right-color: #fff; border-bottom-color: #fff; }
.hruler, .vruler, .drawing { width: 100%; height: 100%; overflow: hidden; }
.hruler text, .vruler text { font: 12px "Noto Sans", sans-serif; }
.drawing { background: #000; }
.note { fill: #e8202a; font: bold 15px "Liberation Serif", serif; }
.vscroll, .hscroll, .logscroll, .lscroll, .tscroll { display: flex; align-items: center; background: #f0f0f0; }
.vscroll, .logscroll, .lscroll, .tscroll { flex-direction: column; }
.vscroll, .lscroll, .tscroll { justify-content: space-between; padding: 6px 0; }
.vscroll b { width: 100%; height: 90px; background: #cdcdcd; }
i { flex: none; width: 6px; height: 6px; border: solid #555; border-width: 2px 0 0 2px; }
.up { transform: rotate(45deg); }
.down { transform: rotate(225deg); }
.left { transform: rotate(-45deg); }
.right { transform: rotate(135deg); }
.hscroll { padding: 0 4px 0 6px; justify-content: space-between; }
.hscroll b { width: 49%; height: 16px; background: #cdcdcd; }
.gridinfo { grid-column: span 2; align-self: center; text-align: right; white-space: nowrap; }
.console { flex: none; margin-top: 4px; border: 1px solid #828790; border-top: 0; background: #fff; font-family: Roboto, sans-serif; }
.log { position: relative; height: 39px; padding-left: 3px; overflow: hidden; border-bottom: 1px solid #828790; }
.log p:first-child { margin-top: -4px; }
.logscroll { position: absolute; right: 0; top: 0; bottom: 0; width: 16px; padding: 7px 0; justify-content: space-between; }
.logscroll b { width: 14px; height: 4px; background: #cdcdcd; }
.command { display: flex; align-items: center; height: 23px; padding-top: 2px; }
.command label { padding-top: 3px; }
.command input { flex: 1; min-width: 0; border: 0; outline: 0; font: inherit; }
.command button { display: grid; place-items: center; width: 21px; height: 20px; margin-right: 1px; border: 1px solid #adadad; background: #e1e1e1; }
.command svg { width: 14px; height: 11px; }
.dock { position: relative; display: flex; flex: none; flex-direction: column; width: 256px; margin-left: 1px; }
.title { display: flex; align-items: center; justify-content: space-between; flex: none; height: 19px; margin: 1px 0 3px; padding: 2px 4px 0 3px; border: 1px solid #b4b4b4; background: #dadada; }
.title svg { width: 26px; height: 10px; }
.title.second { margin-top: 5px; }
.ltools { display: grid; flex: none; grid-template-columns: repeat(5, 1fr); gap: 2px; height: 20px; margin: 0 1px 1px; }
.ltools button { display: grid; place-items: center; border: 1px solid #adadad; background: #e1e1e1; }
.ltools svg { width: 16px; height: 13px; }
.layers { display: flex; flex: none; border: 1px solid #828790; background: #fff; }
.layers ul { flex: 1; list-style: none; }
.layers li { display: flex; align-items: center; height: 18px; padding: 0 6px 0 3px; }
.swatch { width: 16px; height: 9px; margin-right: 6px; border: 1px solid #000; }
.lname { flex: 1; }
.pen { width: 14px; height: 14px; margin-right: 7px; }
.eye { width: 16px; height: 12px; margin-right: 9px; }
.lock { width: 12px; height: 14px; }
.lscroll { width: 16px; }
.lscroll b { width: 100%; height: 18px; margin-bottom: 126px; background: #cdcdcd; }
.trial { display: flex; flex: 1; min-height: 0; border: 1px solid #828790; background: #fff; }
.content { flex: 1; min-width: 0; padding: 4px 4px 0 3px; font-family: Roboto, sans-serif; white-space: nowrap; }
.tscroll { width: 16px; }
.tscroll b { flex: none; width: 100%; height: 240px; margin-bottom: 44px; background: #cdcdcd; }
.card { height: 214px; margin: 12px 1px 27px; padding: 5px 2px; background: #ddd; font: 11px/14px "Liberation Sans", sans-serif; }
.card h2 { padding-left: 4px; font-size: 11px; line-height: 16px; }
.cells { display: grid; grid-template-columns: 50px 70px 46px 53px; gap: 2px; height: 22px; margin: 5px 0 6px; }
.cells button { padding-left: 3px; background: #3399ff; color: #fff; font-weight: bold; text-align: left; }
.cells .green { padding-left: 4px; background: #9acd32; }
.card p { padding-left: 4px; }
a { color: #3399ee; text-decoration: none; }
.frame { position: absolute; left: -17px; top: 8px; width: 267px; height: 251px; border: 5px solid #ed1c24; pointer-events: none; }
.strip { flex: none; width: 33px; padding: 0 2px; }
.strip .hgrip { margin: 4px 2px 3px; }
.strip button { display: grid; place-items: center; width: 28px; height: 29px; }
.strip svg { width: 22px; height: 22px; }
.hsep { display: block; width: 24px; height: 1px; margin: 2px 2px 2px; background: #ccc; }
.status { display: grid; flex: none; grid-template-columns: 232px 294px 342px 1fr; align-items: center; height: 41px; padding-top: 4px; }
.coords { display: flex; flex-direction: column; gap: 6px; height: 37px; padding: 4px 0 0 3px; align-self: end; font-family: Roboto, sans-serif; }
.polar { border-left: 1px solid #aaa; }
.hint { display: flex; align-items: center; gap: 10px; }
.hint svg { width: 28px; height: 32px; }
</style>
